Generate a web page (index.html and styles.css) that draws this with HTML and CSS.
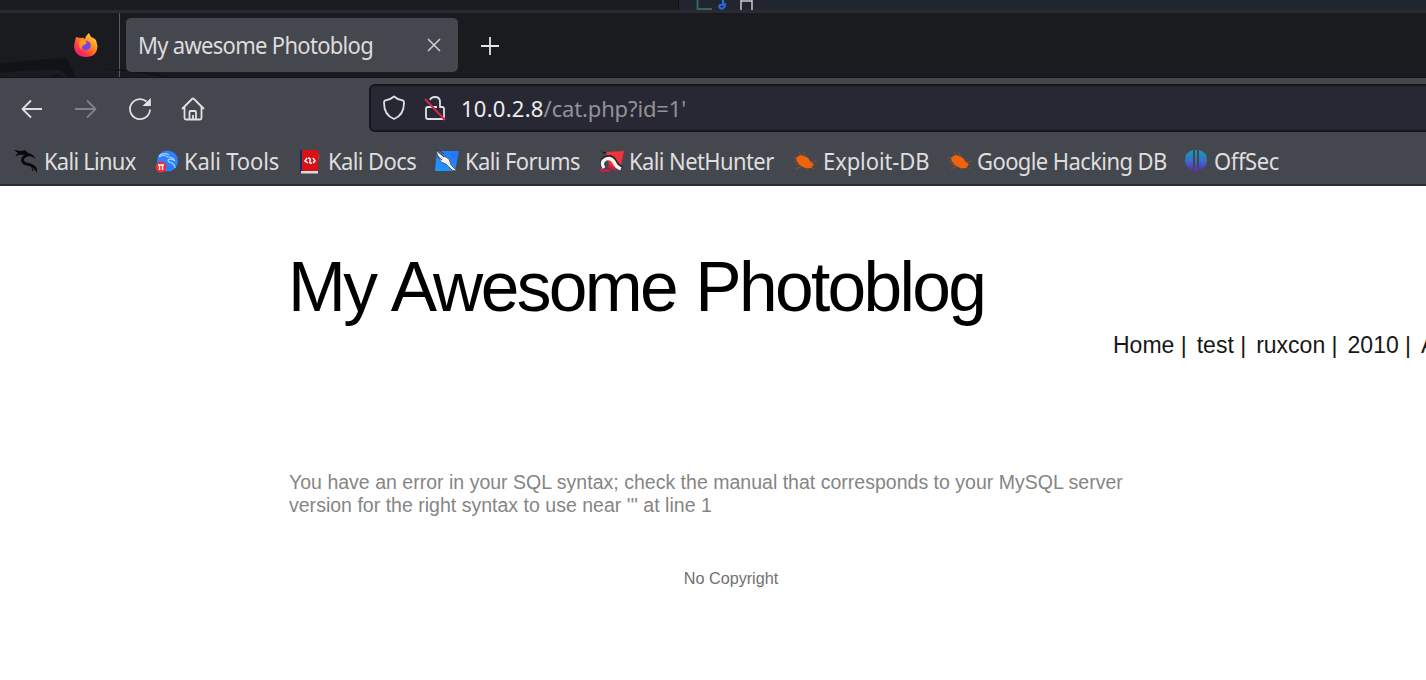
FILE: index.html
```html
<!DOCTYPE html>
<html lang="en">
<head>
<meta charset="utf-8">
<title>My awesome Photoblog</title>
<link rel="stylesheet" href="styles.css">
</head>
<body>
<svg class="defs" width="0" height="0">
  <defs>
    <linearGradient id="fox" x1="1" y1="0" x2=".2" y2="1"><stop offset="0" stop-color="#fff04a"/><stop offset=".45" stop-color="#ff8a1e"/><stop offset=".75" stop-color="#ff3b47"/><stop offset="1" stop-color="#e31587"/></linearGradient>
    <linearGradient id="off" gradientUnits="userSpaceOnUse" x1="0" y1="1" x2="0" y2="23"><stop offset="0" stop-color="#14a0b4"/><stop offset=".5" stop-color="#3a6cc8"/><stop offset="1" stop-color="#6420c4"/></linearGradient>
    <linearGradient id="blue" x1="1" y1="0" x2="0" y2="1"><stop offset="0" stop-color="#2670ff"/><stop offset="1" stop-color="#1d9bff"/></linearGradient>
    <symbol id="bug" viewBox="0 0 24 24"><g stroke="#a04f25" stroke-width=".8" fill="none"><path d="M0 8l6 3M6 3l4 5M10 3l4 6M1 12l6 1M3 20l6-3M12 17l2 4M17 17l4 3M18 13l6-1M8 16l-5-1"/></g><path d="M3 9Q6 5 11 7L15 9Q17 13 21 15L18 19Q14 20 10 18Q4 15 3 9Z" fill="#f0620c"/></symbol>
  </defs>
</svg>
<div class="desktop">
  <div class="behind">
    <svg width="90" height="10" viewBox="0 0 90 10"><path d="M18.500 0V9H33" fill="none" stroke="#32665f" stroke-width="2"/><path d="M47 4L41 5Q39 7 42 8.500Q46 9 46 4M44 0V4" fill="none" stroke="#2868d8" stroke-width="2.200"/><path d="M62 10V0M73 10V0M62 1H73" fill="none" stroke="#c8c9cc" stroke-width="1.500"/></svg>
  </div>
</div>
<header class="browser">
  <div class="tabs">
    <div class="pinned">
      <svg class="dragon" width="200" height="64" viewBox="0 0 200 64"><path d="M0 51Q35 46 67 45L77 66H68L61 57Q30 56 0 60Z" fill="#121316"/><path d="M38 66L58 61L64 66ZM101 56Q145 56 176 66Q140 59 101 56Z" fill="#121316"/></svg>
      <svg class="firefox" width="24" height="26" viewBox="0 0 24 26"><path d="M1 8L2 4L6 5Q9 4 11 6L12 3L15 0L17 4Q20 5 22 7L23.500 13Q23 24 12 24Q1 24 0 13Z" fill="url(#fox)"/><circle cx="12" cy="12.500" r="4.700" fill="#7744df"/><path d="M5 9Q10 4 13 10L10 12Q7 13 8 17Q4 14 5 9Z" fill="#ff9826"/></svg>
    </div>
    <div class="tab"><span class="tab-title">My awesome Photoblog</span>
      <svg width="14" height="14" viewBox="0 0 14 14"><path d="M1 1L13 13M13 1L1 13" stroke="#d0d0d1" stroke-width="1.500"/></svg>
    </div>
    <svg class="plus" width="18" height="18" viewBox="0 0 18 18"><path d="M9 0V18M0 9H18" stroke="#e4e4e5" stroke-width="1.800"/></svg>
  </div>
  <div class="toolbar">
    <div class="buttons">
      <svg width="22" height="20" viewBox="0 0 22 20"><path d="M21 10H1.500M10 1.500L1.500 10L10 18.500" class="line"/></svg>
      <svg width="22" height="20" viewBox="0 0 22 20"><path d="M0 10H20.500M12 1.500L20.500 10L12 18.500" class="line dim"/></svg>
      <svg width="24" height="24" viewBox="0 0 24 24"><path d="M18.500 4.500A10 10 0 1 0 22 12.500" class="line"/><path d="M22.800 1V9H14.500Z" fill="#e4e4e5"/></svg>
      <svg width="24" height="24" viewBox="0 0 24 24"><path d="M1 12L11 2Q12 1 13 2L23 12M3.500 10V21Q3.500 22.500 5 22.500H19Q20.500 22.500 20.500 21V10M8.500 22V15Q8.500 14 9.500 14H14Q15 14 15 15V22M12 18V22" class="line"/></svg>
    </div>
    <div class="address">
      <svg width="24" height="26" viewBox="0 0 24 26"><path d="M12 1.500Q16 5 20.500 5.300Q22 5.500 22 8Q22 20 12 24Q2 20 2 8Q2 5.500 3.500 5.300Q8 5 12 1.500Z" class="line"/></svg>
      <svg class="lock" width="22" height="26" viewBox="0 0 22 26"><path d="M6 5Q7 2 11 2Q16 2 16 7V12H18Q20 12 20 14V22Q20 24 18 24H4Q2 24 2 22V14Q2 12 4 12H13" class="line"/><path d="M1 4L21 25" stroke="#d5244f" stroke-width="2"/></svg>
      <span class="url"><b>10.0.2.8</b>/cat.php?id=1'</span>
    </div>
  </div>
  <nav class="bookmarks">
    <a class="mark m1"><svg width="26" height="26" viewBox="0 0 26 26"><path d="M0 2L7 3L11 2L14 5Q19 6 22 11L17 8Q12 8 10 11Q9 14 15 15Q24 17 23 25Q20 19 15 18Q7 17 7 12Q7 9 10 7L5 6L1 9L4 5Z" fill="#08090b"/><path d="M2 3L10 6M12 5L19 9M17 17L19 23M2 7L8 6" stroke="#08090b"/></svg><span>Kali Linux</span></a>
    <a class="mark m2"><svg width="24" height="24" viewBox="0 0 24 24"><circle cx="12.500" cy="12" r="10.500" fill="#2c80ff"/><path d="M4 8Q9 5 13 8Q18 8 20 12Q16 9 13 11Q13 13 17 14Q20 16 20 19M4 7Q9 3 14 6" fill="none" stroke="#a8d4ff" stroke-width="1.200"/><circle cx="6" cy="18" r="5.500" fill="#ef2f35"/><path d="M3 16H9M4.500 16V21M7.500 16V21" stroke="#fff" stroke-width="1.400"/></svg><span>Kali Tools</span></a>
    <a class="mark m3"><svg width="20" height="25" viewBox="0 0 20 25"><path d="M0 1H3V23H0Z" fill="#172d60"/><path d="M16 2L19.500 5V9L16 18Z" fill="#a83f28"/><path d="M2 1H18V22H2Z" fill="#d71115"/><path d="M1 22H18V24.500H1Z" fill="#dadbd9"/><path d="M7 9L5 12L8 14M8 9Q11 9 10 12Q9 15 12 14M13 9L15 12L13 14" fill="none" stroke="#fff" stroke-width="1.500"/></svg><span>Kali Docs</span></a>
    <a class="mark m4"><svg width="26" height="26" viewBox="0 0 26 26"><path d="M3 3H25L21 23H1Z" fill="url(#blue)"/><path d="M2 2L8 7L15 11L17 17L23 23L18 22L12 16L7 14L4 8Z" fill="#f1f1ef" stroke="#4a5059" stroke-width=".8"/><path d="M1 1L10 9M3 8L8 12M3 1L10 6" stroke="#393b40"/></svg><span>Kali Forums</span></a>
    <a class="mark m5"><svg width="25" height="24" viewBox="0 0 25 24"><path d="M7 3L25 2L21 21L10 16Z" fill="#f33138"/><path d="M1 1L4 3L8 3L5 5" fill="#17191d"/><path d="M5 18Q1 12 7 9Q13 7 16 13Q18 17 23 20" fill="none" stroke="#25272d" stroke-width="5"/><path d="M5 19Q1 13 7 10Q12 8 15 13Q17 18 22 20" fill="none" stroke="#f4f3f2" stroke-width="3.500"/><path d="M1 20L4 22L11 21M9 17L17 21" fill="none" stroke="#d51947" stroke-width="2.500"/></svg><span>Kali NetHunter</span></a>
    <a class="mark m6"><svg width="24" height="24"><use href="#bug"/></svg><span>Exploit-DB</span></a>
    <a class="mark m7"><svg width="24" height="24"><use href="#bug"/></svg><span>Google Hacking DB</span></a>
    <a class="mark m8"><svg width="24" height="24" viewBox="0 0 24 24"><path d="M9 1V20H6Q1 17 1 11Q1 3 9 1ZM15 1V20H18Q23 17 23 11Q23 3 15 1ZM11 1H13V18L14 23H10L11 18Z" fill="url(#off)"/></svg><span>OffSec</span></a>
  </nav>
</header>
<main class="page">
  <h1>My Awesome Photoblog</h1>
  <nav class="menu"><a>Home |</a><a>test |</a><a>ruxcon |</a><a>2010 |</a><a>A</a></nav>
  <p class="error">You have an error in your SQL syntax; check the manual that corresponds to your MySQL server<br>version for the right syntax to use near ''' at line 1</p>
  <footer>No Copyright</footer>
</main>
</body>
</html>
```

FILE: styles.css
```css
* { box-sizing: border-box; }
body { margin: 0; width: 1426px; height: 680px; overflow: hidden; background: #fff; font-family: "Noto Sans", sans-serif; }
svg { display: block; flex: none; }
.defs { position: absolute; }
.desktop { height: 10px; padding-left: 678px; background: #1b1c20; overflow: hidden; }
.behind { height: 10px; background: #202530; border-left: 1px solid #101115; }
.browser { height: 176px; background: #45474e; border-bottom: 2px solid #2c2e33; }
.tabs { height: 68px; display: flex; border-top: 3px solid #292a34; background: #1a1b1f; border-bottom: 1px solid #131418; }
.pinned { width: 120px; border-right: 1px solid #5a5b60; padding: 20px 0 0 74px; position: relative; flex: none; }
.dragon { position: absolute; left: 0; top: 0; }
.firefox { position: relative; }
.tab { position: relative; width: 332px; height: 54px; margin: 5px 0 0 6px; padding: 0 17px 0 12px; border-radius: 5px; background: #45474e; display: flex; align-items: center; justify-content: space-between; color: #dcdcdd; font-size: 22px; }
.tab-title { letter-spacing: -.7px; white-space: nowrap; transform: scaleY(1.05); }
.plus { margin: 24px 0 0 23px; }
.toolbar { height: 59px; display: flex; padding-top: 6px; }
.buttons { width: 369px; display: flex; align-items: center; padding: 0 0 4px 21px; gap: 32px; }
.buttons svg:nth-child(3) { margin-left: -1px; }
.buttons svg:nth-child(4) { margin-left: -3px; }
.line { fill: none; stroke: #e0e0e1; stroke-width: 1.8; stroke-linejoin: round; }
.dim { stroke: #828389; }
.address { flex: 1; height: 48px; border: 2px solid #16171c; border-right: 0; border-radius: 6px 0 0 6px; background: #272833; display: flex; align-items: center; padding: 0 0 1px 11px; }
.lock { margin-left: 18px; }
.url { margin-left: 15px; font-size: 22px; letter-spacing: -.15px; color: #929298; white-space: nowrap; }
.url b { font-weight: 400; letter-spacing: .25px; color: #ededee; }
.bookmarks { height: 48px; display: flex; align-items: center; padding-left: 14px; color: #dededf; font-size: 22px; }
.mark { display: flex; align-items: center; flex: none; white-space: nowrap; }
.m1 { width: 141px; } .m2 { width: 145px; } .m3 { width: 134px; } .m4 { width: 165px; }
.m5 { width: 194px; } .m6 { width: 155px; } .m7 { width: 236px; } .m8 { width: 110px; }
.mark span { margin-left: 5px; letter-spacing: -.6px; transform: scaleY(1.03); }
.m1 span { margin-left: 4px; letter-spacing: -.75px; }
.m2 span { letter-spacing: -.15px; }
.m3 span { margin-left: 8px; letter-spacing: -.6px; }
.m6 span { letter-spacing: -.1px; margin-left: 6px; }
.m8 span { letter-spacing: -.4px; margin-left: 6px; }
.page { padding-left: 289px; font-family: "Liberation Sans", Arial, sans-serif; }
h1 { margin: 0 0 0 -1px; padding-top: 61px; font-size: 69.5px; line-height: 80px; font-weight: 400; letter-spacing: -2.65px; word-spacing: 2.5px; color: #000; white-space: nowrap; }
.menu { width: 313px; margin-left: 824px; padding-top: 3px; display: flex; gap: 10px; white-space: nowrap; font-size: 23px; line-height: 28px; color: #171717; transform: scaleY(1.06); }
.error { margin: 113px 0 0; font-size: 19.5px; line-height: 23px; letter-spacing: .015px; color: #858585; white-space: nowrap; }
footer { width: 884px; margin-top: 51px; text-align: center; font-size: 16.2px; line-height: 20px; color: #707070; }
```
